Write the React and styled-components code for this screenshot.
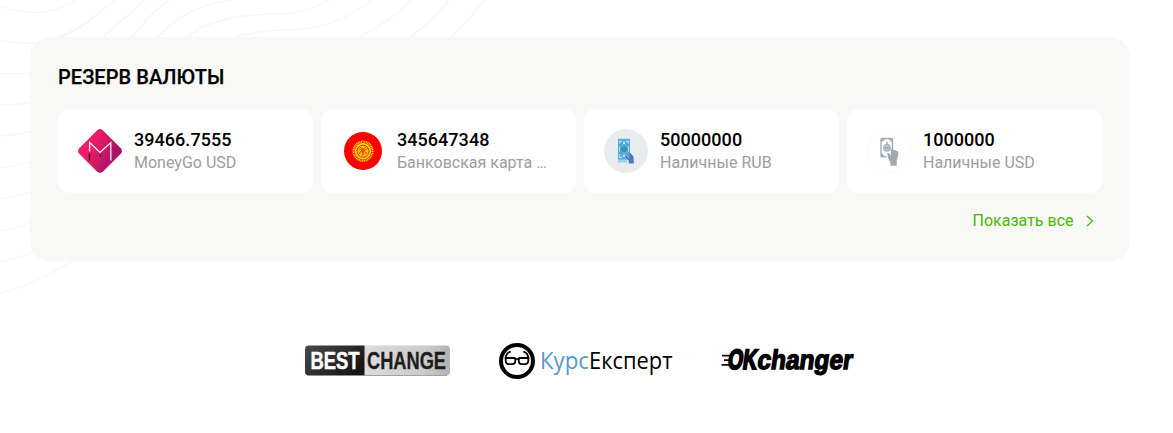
// Libraries
import React from 'react'
import styled, { createGlobalStyle } from 'styled-components'

const GlobalStyle = createGlobalStyle`
  * {
    box-sizing: border-box;
  }

  body {
    margin: 0;
    background: #fff;
    font-family: Roboto, 'Liberation Sans', sans-serif;
    color: #000;
  }
`

const Page = styled.main`
  position: relative;
  height: 433px;
  padding: 37px 43px 0 30px;
  overflow: hidden;
`

const Waves = styled.svg`
  position: absolute;
  top: 0;
  left: 0;
  fill: none;
  stroke: #f6f6f6;
  stroke-width: 1.3;
`

const Panel = styled.section`
  position: relative;
  height: 224px;
  padding: 28px;
  border-radius: 20px;
  background: #f8f8f6;
`

const Title = styled.h2`
  margin: 0 0 20px;
  font-size: 20px;
  font-weight: 500;
  line-height: 24px;
  letter-spacing: 0.05px;
  text-transform: uppercase;
  -webkit-text-stroke: 0.25px #000;
`

const Cards = styled.div`
  display: grid;
  grid-template-columns: repeat(4, 255px);
  gap: 8px;
`

const Card = styled.article`
  display: flex;
  align-items: center;
  height: 84px;
  padding: 0 20px;
  border-radius: 12px;
  background: #fff;

  svg {
    flex: none;
    margin-right: 12px;
  }
`

const CardText = styled.div`
  min-width: 0;
  width: 152px;
`

const Amount = styled.p`
  margin: 0;
  font-size: 18px;
  font-weight: 500;
  line-height: 22px;
  letter-spacing: 0.04px;
`

const Currency = styled.p`
  margin: 0;
  padding-top: 1px;
  overflow: hidden;
  font-size: 16px;
  line-height: 21px;
  color: #9d9d9d;
  text-overflow: ellipsis;
  white-space: nowrap;
`

const ShowAll = styled.a`
  display: flex;
  align-items: center;
  justify-content: flex-end;
  gap: 12.5px;
  margin-top: 16px;
  padding-right: 8px;
  font-size: 16px;
  line-height: 24px;
  color: #4bb700;
  text-decoration: none;
`

const Partners = styled.footer`
  display: flex;
  align-items: flex-start;
  padding: 79px 0 0 274px;
`

const Partner = styled.svg`
  flex: none;
  width: ${({ $width }) => $width}px;
  height: 44px;
  margin-right: ${({ $gap }) => $gap || 0}px;
  overflow: visible;
`

const MoneyGoIcon = () => (
  <svg width="44" height="44" viewBox="0 0 44 44">
    <defs>
      <linearGradient id="moneygo" x1="0" y1="0.3" x2="1" y2="0.75">
        <stop offset="0" stopColor="#ff1e69" />
        <stop offset="0.35" stopColor="#e71c68" />
        <stop offset="1" stopColor="#8f1064" />
      </linearGradient>
    </defs>
    <path
      d="M19.2 1.2q2.8-2.3 5.6 0l18 18q2.3 2.8 0 5.6l-18 18q-2.8 2.3-5.6 0l-18-18q-2.3-2.8 0-5.6z"
      fill="url(#moneygo)"
    />
    <path d="M11.6 22.5V13.5L22 23.5l10.8-10V31.5" fill="none" stroke="#fff" strokeWidth="1.2" />
    <path d="M11.5 24.5v7" stroke="#1b1018" strokeWidth="1.3" />
    <circle cx="22.4" cy="26.4" r="0.9" fill="#1b1018" />
  </svg>
)

const KyrgyzIcon = () => (
  <svg width="44" height="44" viewBox="0 0 44 44">
    <circle cx="22" cy="22" r="19" fill="#f00" />
    <circle cx="22" cy="22.2" r="9.6" fill="none" stroke="#ffef00" strokeWidth="2" strokeDasharray="1 0.65" />
    <circle cx="22" cy="22.2" r="8.2" fill="#ffde00" />
    <circle cx="22" cy="22.2" r="6" fill="#ffd400" stroke="#f00" strokeWidth="0.9" />
    <path
      d="M17 19.5q5 0.5 9.5 6M27 19.5q-5 0.5-9.5 6M18.5 17.8q4.5 2 7.8 7M25.5 17.8q-4.5 2-7.8 7M22 22l-1 4.5M22 22l1 4.5"
      fill="none"
      stroke="#f22a00"
      strokeWidth="0.8"
    />
  </svg>
)

const CashRubIcon = () => (
  <svg width="44" height="44" viewBox="0 0 44 44">
    <defs>
      <linearGradient id="note" x1="0" y1="0" x2="1" y2="1">
        <stop offset="0" stopColor="#45afce" />
        <stop offset="1" stopColor="#6ba9dc" />
      </linearGradient>
    </defs>
    <circle cx="22" cy="22" r="22" fill="#e8ecee" />
    <path d="M14 9.8h12v21H14z" fill="url(#note)" />
    <path
      d="M15.7 14.5V12h2M24.3 14.5V12h-2M15.7 25.5v3h2M15.7 17.5v5M24.3 17.5v5"
      fill="none"
      stroke="#c9e8f3"
    />
    <ellipse cx="20" cy="20.3" rx="3.8" ry="2.9" fill="#3d91bf" />
    <path d="M20 12.5v2.5M20 25.8v2" stroke="#d9eff6" strokeWidth="1.8" />
    <path d="M14 31.2h9v2.2h-9z" fill="#8ed0e5" />
    <path d="M21.3 24.5q1.5-0.8 3 1.2l1.5 1.2-0.2-4 3.8 4.5 0.5 7H25l-0.4-2.6-3.2-4.5z" fill="#477bbd" />
    <path d="M21.5 24.8l3.6 3.8" stroke="#b4dced" />
  </svg>
)

const CashUsdIcon = () => (
  <svg width="44" height="44" viewBox="0 0 44 44">
    <circle cx="22" cy="22" r="21.5" fill="#fff" stroke="#fafafa" />
    <path
      d="M25.5 20V10.2q0-0.7-0.7-0.7H14.7q-0.7 0-0.7 0.7V27q0 0.7 0.7 0.7H19.5"
      fill="none"
      stroke="#a3aeb4"
      strokeWidth="1.4"
    />
    <path d="M14.7 13V10h3zM25 13V10h-3zM14.7 24.5v3h3z" fill="#a3aeb4" stroke="#a3aeb4" strokeWidth="0.8" />
    <circle cx="20" cy="18.8" r="3.3" fill="#c2cacf" stroke="#a3aeb4" strokeWidth="1.2" />
    <path d="M18 19h4M20 13v2" stroke="#96a3aa" strokeWidth="1.4" />
    <path
      d="M20.3 24.3q1.3-0.9 2.2 0.5l1.4 1.9v-5.8q0.2-1.3 1.3-1.3 1.1 0 1.3 1.2l3.7 1.3q1.2 0.6 1.2 2-0.1 4.2-1.7 7v5.6h-6.3v-3.3q-2.2-2.6-3.1-8.1z"
      fill="#9faab1"
    />
  </svg>
)

const BestChangeLogo = () => (
  <Partner $width={146} $gap={47} viewBox="0 0 146 44">
    <defs>
      <linearGradient id="best" x1="0" y1="0" x2="1" y2="0.6">
        <stop offset="0" stopColor="#4a4a4a" />
        <stop offset="1" stopColor="#161616" />
      </linearGradient>
      <linearGradient id="change">
        <stop offset="0" stopColor="#dcdcdc" />
        <stop offset="0.75" stopColor="#c9c9c9" />
        <stop offset="1" stopColor="#b2b2b2" />
      </linearGradient>
    </defs>
    <path d="M60 5.5h82q4 0 4 4v22q0 4-4 4H60z" fill="url(#change)" />
    <path d="M5 5.5h55.5v30H5q-4 0-4-4v-22q0-4 4-4z" fill="url(#best)" />
    <path d="M3 35.5h140" stroke="#8f8f8f" strokeWidth="0.8" />
    <g fontFamily="Liberation Sans, sans-serif" fontWeight="700" fontSize="24">
      <text x="6.5" y="29.2" fill="#fff" stroke="#fff" strokeWidth="0.5" textLength="49" lengthAdjust="spacingAndGlyphs">
        BEST
      </text>
      <text x="63" y="29.2" fill="#1d1d1d" stroke="#1d1d1d" strokeWidth="0.3" textLength="79" lengthAdjust="spacingAndGlyphs">
        CHANGE
      </text>
    </g>
  </Partner>
)

const KursExpertLogo = () => (
  <Partner $width={176} $gap={46} viewBox="0 0 176 44">
    <circle cx="20" cy="21" r="16" fill="#fff" stroke="#000" strokeWidth="4" />
    <g fill="none" stroke="#000" strokeWidth="1.8" strokeLinecap="round">
      <path d="M8.6 18.5Q9 13 13 11.8M31.4 18.5Q31 13 27 11.8" />
      <path d="M8.7 18h8.6q1 0 1 1v2q0 3.2-3.2 3.200h-3.300q-2.800 0-3.100-3.200z" />
      <path d="M31.3 18h-8.6q-1 0-1 1v2q0 3.2 3.2 3.200h3.300q2.800 0 3.100-3.200z" />
      <path d="M18.3 19.3q1.700-0.800 3.400 0" />
    </g>
    <g fontFamily="Open Sans, Noto Sans, sans-serif" fontSize="23">
      <text x="43" y="29" fill="#5897cd" textLength="49" lengthAdjust="spacingAndGlyphs">
        Курс
      </text>
      <text x="92" y="29" textLength="83.500" lengthAdjust="spacingAndGlyphs">
        Експерт
      </text>
    </g>
  </Partner>
)

const OkChangerLogo = () => (
  <Partner $width={136} viewBox="0 0 136 44">
    <path d="M3 15.7h10M5 20.2h7M2.5 24.8h9" stroke="#111" strokeWidth="1.7" />
    <g transform="translate(8 29.4) skewX(-8)" stroke="#000" fontFamily="Liberation Sans, sans-serif" fontWeight="700">
      <text fontSize="28" strokeWidth="2.1" textLength="29" lengthAdjust="spacingAndGlyphs">
        OK
      </text>
      <text x="29.5" fontSize="27" strokeWidth="1.4" textLength="95" lengthAdjust="spacingAndGlyphs">
        changer
      </text>
    </g>
  </Partner>
)

const reserves = [
  { amount: '39466.7555', currency: 'MoneyGo USD', Icon: MoneyGoIcon },
  { amount: '345647348', currency: 'Банковская карта KGS', Icon: KyrgyzIcon },
  { amount: '50000000', currency: 'Наличные RUB', Icon: CashRubIcon },
  { amount: '1000000', currency: 'Наличные USD', Icon: CashUsdIcon },
]

const waves = [
  'M0 6Q18 12.5 37 12.6Q58 11 77 0',
  'M0 40.5Q18 43.5 35 43Q75 37 114 0',
  'M0 73.3Q15 74 30 73.3',
  'M60 37Q75 32 90 21',
  'M103 37L145 0',
  'M132 37Q150 14 169 0',
  'M158 37Q185 6 232 0',
  'M187 37Q210 18 255 15Q277 13.6 287 13.3Q309 12 329 0',
  'M235 37Q256 30.5 300 29.2Q332 28.5 373 0',
  'M359 37Q388 23 412 0',
  'M410 37Q432 21 449 0',
  'M451 37Q471 18 484 0',
  'M0 104.5Q15 105.5 30 102.5',
  'M0 135.7Q15 135.5 30 131.5',
  'M0 167.5Q15 166.5 30 161.5',
  'M0 199Q15 197.5 30 192',
  'M0 231Q15 229 30 222.5',
  'M0 262Q15 259.5 34 251.5',
  'M0 293Q35 285 72 261',
]

export default function App() {
  return (
    <Page>
      <GlobalStyle />
      <Waves width="500" height="310">
        {waves.map((d) => (
          <path key={d} d={d} />
        ))}
      </Waves>
      <Panel>
        <Title>Резерв валюты</Title>
        <Cards>
          {reserves.map(({ amount, currency, Icon }) => (
            <Card key={currency}>
              <Icon />
              <CardText>
                <Amount>{amount}</Amount>
                <Currency>{currency}</Currency>
              </CardText>
            </Card>
          ))}
        </Cards>
        <ShowAll href="#">
          Показать все
          <svg width="8" height="12" viewBox="0 0 8 12" fill="none" stroke="currentColor" strokeWidth="1.3">
            <path d="M1 1l5.5 5L1 11" />
          </svg>
        </ShowAll>
      </Panel>
      <Partners>
        <BestChangeLogo />
        <KursExpertLogo />
        <OkChangerLogo />
      </Partners>
    </Page>
  )
}
